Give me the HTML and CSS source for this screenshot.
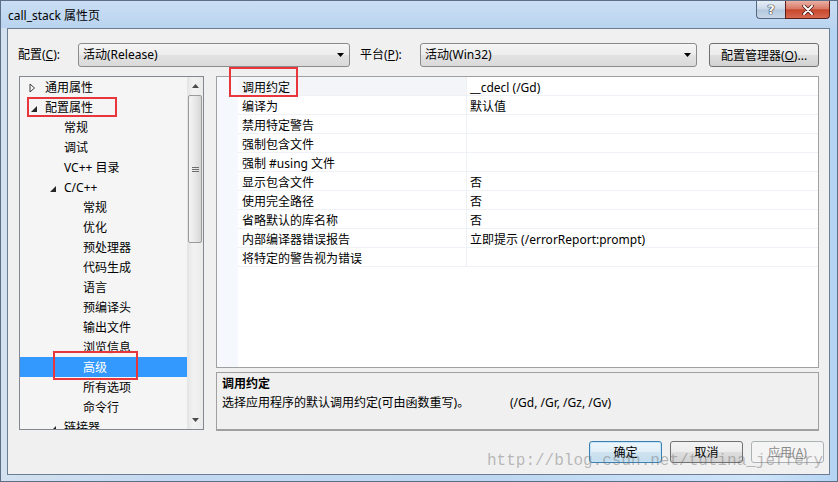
FILE: index.html
```html
<!DOCTYPE html>
<html lang="zh-CN">
<head>
    <meta charset="UTF-8">
    <title>call_stack 属性页</title>
    <link rel="stylesheet" href="styles.css">
</head>
<body>
    <div class="window">
        <div class="titlebar">
            <span class="title">call_stack 属性页</span>
            <div class="caption">
                <span class="cap help">?</span>
                <span class="cap close">
                    <svg width="12" height="10" viewBox="0 0 12 10"><path d="M2 1 L10 9 M10 1 L2 9" stroke="#3a1010" stroke-width="3.4" stroke-linecap="round"/><path d="M2 1 L10 9 M10 1 L2 9" stroke="#fff" stroke-width="2" stroke-linecap="round"/></svg>
                </span>
            </div>
        </div>

        <div class="client">
            <div class="toolbar">
                <span class="tb-label">配置(<u>C</u>):</span>
                <div class="combo conf">
                    <span>活动(Release)</span>
                    <svg width="7" height="4" viewBox="0 0 7 4"><path d="M0 0 H7 L3.5 4 Z" fill="#000"/></svg>
                </div>
                <span class="tb-label gap">平台(<u>P</u>):</span>
                <div class="combo plat">
                    <span>活动(Win32)</span>
                    <svg width="7" height="4" viewBox="0 0 7 4"><path d="M0 0 H7 L3.5 4 Z" fill="#000"/></svg>
                </div>
                <button class="btn mgr">配置管理器(<u>O</u>)...</button>
            </div>

            <div class="main">
                <div class="tree">
                    <div class="tree-list">
                        <div class="node l0"><span class="tw"><svg width="7" height="10" viewBox="0 0 7 10"><path d="M1 1 L5.5 5 L1 9 Z" fill="none" stroke="#3c3c3c"/></svg></span>通用属性</div>
                        <div class="node l0"><span class="tw"><svg class="open" width="6" height="6" viewBox="0 0 6 6"><path d="M6 0 V6 H0 Z" fill="#262626"/></svg></span>配置属性</div>
                        <div class="node l1"><span class="tw"></span>常规</div>
                        <div class="node l1"><span class="tw"></span>调试</div>
                        <div class="node l1"><span class="tw"></span>VC++ 目录</div>
                        <div class="node l1"><span class="tw"><svg class="open" width="6" height="6" viewBox="0 0 6 6"><path d="M6 0 V6 H0 Z" fill="#262626"/></svg></span>C/C++</div>
                        <div class="node l2"><span class="tw"></span>常规</div>
                        <div class="node l2"><span class="tw"></span>优化</div>
                        <div class="node l2"><span class="tw"></span>预处理器</div>
                        <div class="node l2"><span class="tw"></span>代码生成</div>
                        <div class="node l2"><span class="tw"></span>语言</div>
                        <div class="node l2"><span class="tw"></span>预编译头</div>
                        <div class="node l2"><span class="tw"></span>输出文件</div>
                        <div class="node l2"><span class="tw"></span>浏览信息</div>
                        <div class="node l2 selected"><span class="tw"></span>高级</div>
                        <div class="node l2"><span class="tw"></span>所有选项</div>
                        <div class="node l2"><span class="tw"></span>命令行</div>
                        <div class="node l1"><span class="tw"><svg class="open" width="6" height="6" viewBox="0 0 6 6"><path d="M6 0 V6 H0 Z" fill="#262626"/></svg></span>链接器</div>
                    </div>
                    <div class="vscroll">
                        <div class="sb-btn"><svg width="7" height="4" viewBox="0 0 7 4"><path d="M0 4 H7 L3.5 0 Z" fill="#4a4a4a"/></svg></div>
                        <div class="sb-thumb">
                            <svg width="7" height="7" viewBox="0 0 7 7"><path d="M0 1.5 H7 M0 3.5 H7 M0 5.5 H7" stroke="#6e6e6e"/></svg>
                        </div>
                        <div class="sb-track"></div>
                        <div class="sb-btn"><svg width="7" height="4" viewBox="0 0 7 4"><path d="M0 0 H7 L3.5 4 Z" fill="#4a4a4a"/></svg></div>
                    </div>
                </div>

                <div class="right-col">
                    <div class="grid">
                        <div class="gutter"></div>
                        <div class="rows">
                            <div class="row current"><span class="name">调用约定</span><span class="value">__cdecl (/Gd)</span></div>
                            <div class="row"><span class="name">编译为</span><span class="value">默认值</span></div>
                            <div class="row"><span class="name">禁用特定警告</span><span class="value"></span></div>
                            <div class="row"><span class="name">强制包含文件</span><span class="value"></span></div>
                            <div class="row"><span class="name">强制 #using 文件</span><span class="value"></span></div>
                            <div class="row"><span class="name">显示包含文件</span><span class="value">否</span></div>
                            <div class="row"><span class="name">使用完全路径</span><span class="value">否</span></div>
                            <div class="row"><span class="name">省略默认的库名称</span><span class="value">否</span></div>
                            <div class="row"><span class="name">内部编译器错误报告</span><span class="value">立即提示 (/errorReport:prompt)</span></div>
                            <div class="row"><span class="name">将特定的警告视为错误</span><span class="value"></span></div>
                        </div>
                    </div>
                    <div class="desc">
                        <div class="desc-title">调用约定</div>
                        <div><span class="desc-text">选择应用程序的默认调用约定(可由函数重写)。</span><span>(/Gd, /Gr, /Gz, /Gv)</span></div>
                    </div>
                </div>
            </div>

            <div class="footer">
                <button class="btn default">确定</button>
                <button class="btn">取消</button>
                <button class="btn" disabled>应用(<u>A</u>)</button>
            </div>
        </div>

        <!-- red annotation boxes -->
        <div class="mark m-tree"></div>
        <div class="mark m-adv"></div>
        <div class="mark m-grid"></div>

        <div class="watermark">http://blog.csdn.net/tutina_jeffery</div>
    </div>
</body>
</html>
```

FILE: styles.css
```css
* {
    box-sizing: border-box;
}

body {
    margin: 0;
    font-family: "Noto Sans", "Noto Sans CJK SC", sans-serif;
    font-size: 12px;
    line-height: 16px;
    color: #000;
}

.window {
    position: relative;
    width: 838px;
    height: 482px;
    border: 1px solid #5d6f86;
    background: linear-gradient(to right, #d3e1ef 0, #c3d9f1 20%, #bdd7f2 60%, #cfe4f9 90%, #b5d4f3 100%);
    overflow: hidden;
}

.titlebar {
    height: 27px;
    display: flex;
    align-items: flex-start;
    background: linear-gradient(#c9def4, #bad4f0);
}

.title {
    padding: 7px 0 0 7px;
    font-size: 12px;
}

.caption {
    margin-left: auto;
    margin-right: 7px;
    display: flex;
}

.cap {
    height: 18px;
    display: flex;
    align-items: center;
    justify-content: center;
}

.cap.help {
    width: 29px;
    border: 1px solid #56687f;
    border-top: none;
    border-right: none;
    border-radius: 0 0 0 4px;
    background: linear-gradient(#e6eef7, #cbd9e8 48%, #b4c7dc 52%, #c8d8ea);
    color: #fff;
    font-weight: bold;
    font-size: 13px;
    font-family: "DejaVu Sans", sans-serif;
    text-shadow: 0 0 1px #223, 0 0 1px #223, 0 0 1px #223;
}

.cap.close {
    width: 45px;
    border: 1px solid #5a1f1a;
    border-top: none;
    border-radius: 0 0 4px 0;
    background: linear-gradient(#eab0a4, #d87a66 45%, #c7462d 52%, #d5694f);
}

.client {
    margin-left: 6px;
    width: 823px;
    height: 447px;
    border: 1px solid #6d7d91;
    background: #f0f0f0;
}

/* toolbar */

.toolbar {
    display: flex;
    align-items: center;
    height: 24px;
    margin-top: 14px;
    padding-left: 10px;
}

.tb-label {
    width: 60px;
}

.tb-label.gap {
    margin-left: 10px;
}

.combo {
    height: 24px;
    display: flex;
    align-items: center;
    justify-content: space-between;
    padding: 0 5px 0 4px;
    border: 1px solid #8b8b8b;
    border-radius: 3px;
    background: linear-gradient(#f6f6f6, #ececec 50%, #e2e2e2 52%, #dadada);
}

.combo.conf {
    width: 272px;
}

.combo.plat {
    width: 277px;
}

.btn {
    height: 22px;
    width: 73px;
    padding: 0;
    font-family: "Noto Sans", "Noto Sans CJK SC", sans-serif;
    font-size: 12px;
    color: #000;
    border: 1px solid #707070;
    border-radius: 3px;
    background: linear-gradient(#f3f3f3, #ececec 50%, #dedede 52%, #d2d2d2);
}

.btn.mgr {
    margin-left: 12px;
    width: 110px;
    height: 24px;
}

.btn.default {
    border-color: #3c7fb1;
    box-shadow: inset 0 0 0 1px #c6e4f7;
    background: linear-gradient(#eef6fb, #e1eef7 50%, #cfe3f0 52%, #c3dcec);
}

.btn:disabled {
    border-color: #adb2b5;
    background: #f4f4f4;
    color: #8a8a8a;
}

/* main area */

.main {
    display: flex;
    gap: 12px;
    margin-top: 9px;
    padding-left: 11px;
}

.tree {
    width: 185px;
    height: 354px;
    display: flex;
    border: 1px solid #828790;
    background: #f5f5f5;
}

.tree-list {
    flex: 1;
    overflow: hidden;
}

.node {
    height: 20px;
    padding-top: 2px;
    display: flex;
    align-items: center;
    white-space: nowrap;
}

.node.l0 {
    padding-left: 9px;
}

.node.l1 {
    padding-left: 28px;
}

.node.l2 {
    padding-left: 47px;
}

.tw {
    width: 16px;
    display: flex;
    align-items: center;
}

.tw .open {
    margin-left: 2px;
    margin-top: 2px;
}

.node.selected {
    background: #3399ff;
    color: #fff;
}

.vscroll {
    width: 16px;
    display: flex;
    flex-direction: column;
    background: linear-gradient(to right, #e4e4e4, #f2f2f2 40%, #ebebeb);
}

.sb-btn {
    height: 18px;
    display: flex;
    align-items: center;
    justify-content: center;
}

.sb-thumb {
    height: 148px;
    margin: 0 1px;
    display: flex;
    align-items: center;
    justify-content: center;
    border: 1px solid #9a9a9a;
    border-radius: 2px;
    background: linear-gradient(to right, #f4f4f4, #e8e8e8 50%, #d6d6d6);
}

.sb-track {
    flex: 1;
}

.right-col {
    display: flex;
    flex-direction: column;
    gap: 4px;
}

.grid {
    width: 603px;
    height: 292px;
    display: flex;
    border: 1px solid #a0a0a0;
    background: #fff;
}

.gutter {
    width: 21px;
    background: #f5f8fc;
}

.rows {
    flex: 1;
}

.row {
    height: 19px;
    display: flex;
    border-bottom: 1px solid #eef1f6;
}

.row .name {
    width: 229px;
    padding: 3px 0 0 4px;
    border-right: 1px solid #eef1f6;
}

.row.current .name {
    background: #f3f5f8;
}

.row .value {
    flex: 1;
    padding: 3px 0 0 3px;
}

.desc {
    height: 59px;
    padding: 1px 5px 0;
    border: 1px solid #a0a0a0;
    border-bottom-width: 2px;
    background: #f0f0f0;
    line-height: 19px;
}

.desc-title {
    font-weight: bold;
}

.desc-text {
    display: inline-block;
    width: 288px;
}

.footer {
    display: flex;
    justify-content: flex-end;
    gap: 8px;
    margin-top: 10px;
    padding-right: 5px;
}

/* overlays */

.mark {
    position: absolute;
    border: 2px solid #e8363c;
}

.m-tree {
    left: 26px;
    top: 96px;
    width: 90px;
    height: 20px;
}

.m-adv {
    left: 52px;
    top: 350px;
    width: 85px;
    height: 29px;
}

.m-grid {
    left: 228px;
    top: 66px;
    width: 69px;
    height: 30px;
}

.watermark {
    position: absolute;
    left: 486px;
    top: 452px;
    font-family: "Liberation Mono", monospace;
    font-size: 16px;
    line-height: 16px;
    color: rgba(110, 110, 110, 0.45);
    white-space: nowrap;
}
```
